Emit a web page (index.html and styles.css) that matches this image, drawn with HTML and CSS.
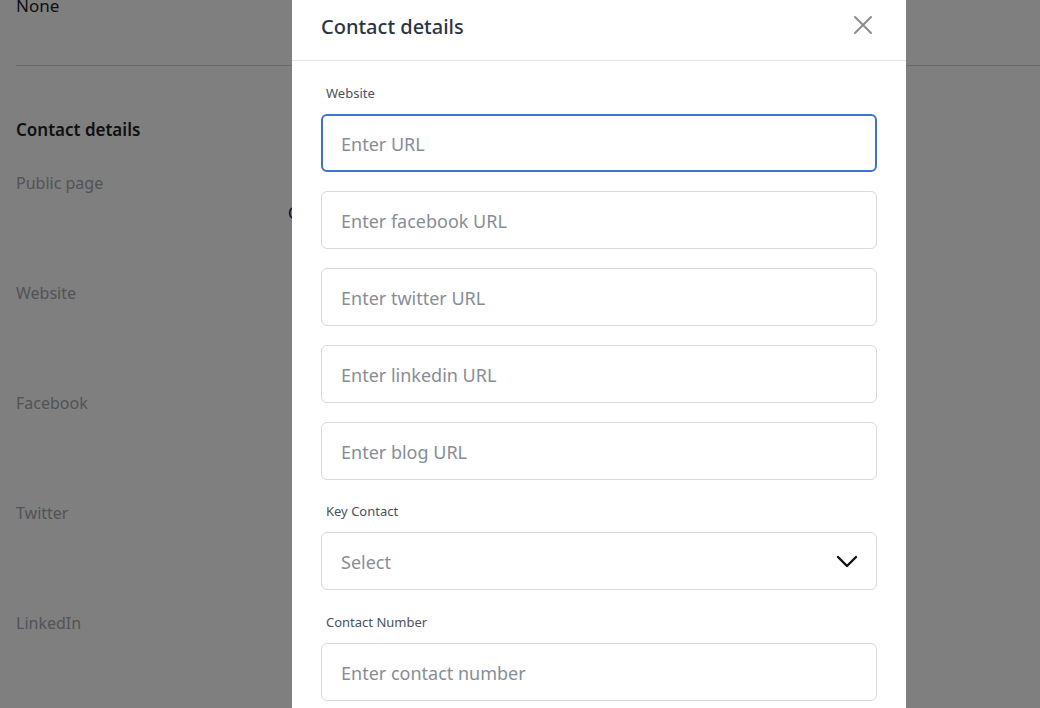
FILE: index.html
```html
<!DOCTYPE html>
<html lang="en">
<head>
    <meta charset="UTF-8">
    <meta name="viewport" content="width=device-width, initial-scale=1.0">
    <title>Contact details</title>
    <link rel="stylesheet" href="styles.css">
</head>
<body>
    <!-- Profile page behind the modal -->
    <div class="page">
        <div class="section top-section">
            <p class="value">None</p>
        </div>

        <div class="section">
            <h3 class="section-title">Contact details</h3>
            <div class="field">
                <span class="field-label">Public page</span>
                <span class="field-value">Off</span>
            </div>
            <div class="field"><span class="field-label">Website</span></div>
            <div class="field"><span class="field-label">Facebook</span></div>
            <div class="field"><span class="field-label">Twitter</span></div>
            <div class="field"><span class="field-label">LinkedIn</span></div>
        </div>
    </div>

    <!-- Modal -->
    <div class="overlay"></div>
    <div class="modal">
        <div class="modal-header">
            <h2>Contact details</h2>
            <button class="close" aria-label="Close">
                <svg width="20" height="20" viewBox="0 0 20 20">
                    <path d="M2 2 L18 18 M18 2 L2 18" stroke="#8c8c8c" stroke-width="2" stroke-linecap="round"/>
                </svg>
            </button>
        </div>

        <form class="modal-body">
            <label class="label" for="website">Website</label>
            <input type="text" id="website" class="input focused" placeholder="Enter URL">

            <input type="text" class="input" placeholder="Enter facebook URL">
            <input type="text" class="input" placeholder="Enter twitter URL">
            <input type="text" class="input" placeholder="Enter linkedin URL">
            <input type="text" class="input last-url" placeholder="Enter blog URL">

            <label class="label">Key Contact</label>
            <div class="input select">
                <span>Select</span>
                <svg width="22" height="14" viewBox="0 0 22 14">
                    <path d="M2 2 L11 11 L20 2" fill="none" stroke="#111" stroke-width="2.4" stroke-linecap="round" stroke-linejoin="round"/>
                </svg>
            </div>

            <label class="label" for="contactNumber">Contact Number</label>
            <input type="text" id="contactNumber" class="input" placeholder="Enter contact number">
        </form>
    </div>
</body>
</html>
```

FILE: styles.css
```css
/* General styles */
body {
    margin: 0;
    font-family: 'Noto Sans', 'Open Sans', sans-serif;
    background: #ffffff;
    height: 708px;
    overflow: hidden;
}

/* Page behind modal */
.page {
    padding: 0 0 0 16px;
    margin-top: -8px;
}

.section {
    border-bottom: 1px solid #d6d6d6;
}

.top-section {
    height: 73px;
}

.section:last-child {
    border-bottom: none;
}

.value {
    margin: 0;
    font-size: 17px;
    color: #222;
    line-height: 28px;
}

.section-title {
    margin: 52px 0 0;
    font-size: 17px;
    font-weight: 600;
    color: #222;
    line-height: 24px;
}

.field {
    height: 110px;
    display: flex;
    align-items: flex-start;
}

.field:nth-child(2) {
    margin-top: 30px;
}

.field-label {
    font-size: 16px;
    color: #a3a6ae;
    line-height: 22px;
    width: 272px;
}

.field-value {
    font-size: 16px;
    color: #222;
    margin-top: 30px;
}

/* Overlay */
.overlay {
    position: fixed;
    inset: 0;
    background: rgba(0, 0, 0, 0.5);
}

/* Modal */
.modal {
    position: absolute;
    top: 0;
    left: 292px;
    width: 614px;
    height: 708px;
    background: #ffffff;
}

.modal-header {
    height: 61px;
    border-bottom: 1px solid #e3e5e8;
    display: flex;
    align-items: center;
    justify-content: space-between;
    padding: 0 33px 0 29px;
    box-sizing: border-box;
}

.modal-header h2 {
    margin: 0;
    font-size: 20px;
    font-weight: 500;
    color: #2b3445;
    margin-top: -8px;
}

.close {
    background: none;
    border: none;
    padding: 0;
    margin-top: -10px;
    display: flex;
    cursor: pointer;
}

.modal-body {
    padding: 23px 29px 0 29px;
    display: flex;
    flex-direction: column;
}

.label {
    font-size: 13px;
    color: #4b5160;
    margin: 0 0 12px 5px;
    line-height: 18px;
}

.input {
    height: 58px;
    box-sizing: border-box;
    border: 1px solid #d6dade;
    border-radius: 6px;
    padding: 2px 19px 0;
    font-family: inherit;
    font-size: 18px;
    color: #2b3445;
    margin-bottom: 19px;
    outline: none;
    background: #fff;
}

.input::placeholder {
    color: #878d97;
}

.focused {
    border: 2px solid #3b74c9;
    padding: 2px 18px 0;
}

.last-url {
    margin-bottom: 22px;
}

.select {
    display: flex;
    align-items: center;
    justify-content: space-between;
    color: #878d97;
    padding-right: 18px;
    margin-bottom: 23px;
}
```
